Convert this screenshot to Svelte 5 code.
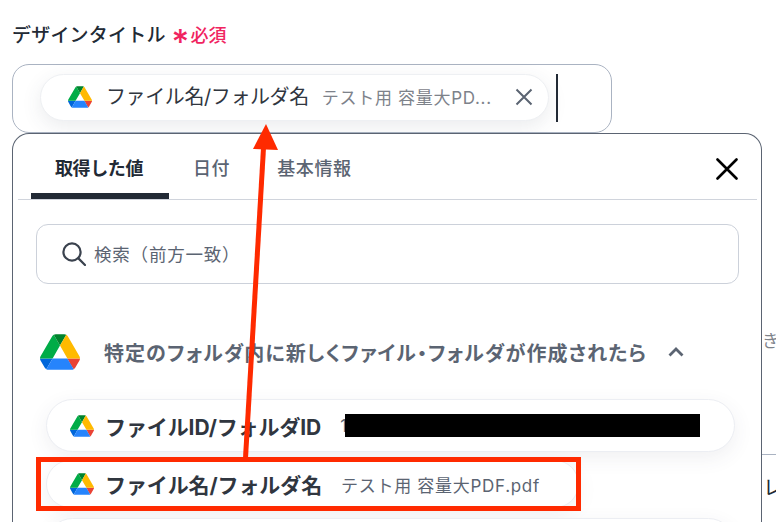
<script>
  const tabs = [
    { label: '取得した値', active: true },
    { label: '日付', active: false },
    { label: '基本情報', active: false }
  ];
</script>

{#snippet drive(cls)}
  <svg class={cls} viewBox="0 0 87.3 78" aria-hidden="true">
    <path d="m6.6 66.85 3.85 6.65c.8 1.4 1.95 2.5 3.3 3.3l13.75-23.8h-27.5c0 1.55.4 3.1 1.2 4.5z" fill="#0066da"/>
    <path d="m43.65 25-13.75-23.8c-1.35.8-2.5 1.9-3.3 3.3l-25.4 44a9.06 9.06 0 0 0 -1.2 4.5h27.5z" fill="#00ac47"/>
    <path d="m73.55 76.8c1.35-.8 2.5-1.9 3.3-3.3l1.6-2.75 7.65-13.25c.8-1.4 1.2-2.95 1.2-4.5h-27.502l5.852 11.5z" fill="#ea4335"/>
    <path d="m43.65 25 13.75-23.8c-1.35-.8-2.9-1.2-4.5-1.2h-18.5c-1.6 0-3.15.45-4.5 1.2z" fill="#00832d"/>
    <path d="m59.8 53h-32.3l-13.75 23.8c1.35.8 2.9 1.2 4.5 1.2h50.8c1.6 0 3.15-.45 4.5-1.2z" fill="#2684fc"/>
    <path d="m73.4 26.5-12.7-22c-.8-1.4-1.95-2.5-3.3-3.3l-13.75 23.8 16.15 28h27.45c0-1.55-.4-3.1-1.2-4.5z" fill="#ffba00"/>
  </svg>
{/snippet}

<div class="page">
  <div class="label">
    <span class="label-text">デザインタイトル</span>
    <span class="star">*</span>
    <span class="req">必須</span>
  </div>

  <div class="input">
    <div class="pill">
      {@render drive('icon-m')}
      <span class="pill-name">ファイル名/フォルダ名</span>
      <span class="pill-value">テスト用 容量大PD...</span>
      <svg class="pill-x" viewBox="0 0 18 18" aria-hidden="true">
        <path d="M1.5 1.5 16.5 16.5M16.5 1.5 1.5 16.5" />
      </svg>
    </div>
    <div class="caret"></div>
  </div>

  <div class="lower">
    <div class="panel">
      <div class="tabs">
        {#each tabs as t}
          <div class="tab" class:active={t.active}>{t.label}</div>
        {/each}
        <svg class="close" viewBox="0 0 22 22" aria-hidden="true">
          <path d="M1.5 1.5 20.5 20.5M20.5 1.5 1.5 20.5" />
        </svg>
      </div>

      <div class="search">
        <svg class="search-icon" viewBox="0 0 24 24" aria-hidden="true">
          <circle cx="10" cy="10" r="8.6" />
          <path d="M16.4 16.4 23 23" />
        </svg>
        <span>検索（前方一致）</span>
      </div>

      <div class="section">
        {@render drive('icon-l')}
        <span class="section-title">特定のフォルダ内に新しくファイル・フォルダが作成されたら</span>
        <svg class="chevron" viewBox="0 0 16 10" aria-hidden="true">
          <path d="M1.5 8.5 8 2l6.5 6.5" />
        </svg>
      </div>

      <div class="rows">
        <div class="row row-wide">
          {@render drive('icon-m')}
          <span class="row-name">ファイルID/フォルダID</span>
          <span class="row-value">1</span>
          <span class="redact"></span>
        </div>
        <div class="row row-short">
          {@render drive('icon-m')}
          <span class="row-name">ファイル名/フォルダ名</span>
          <span class="row-value">テスト用 容量大PDF.pdf</span>
        </div>
        <div class="row row-wide"></div>
      </div>
    </div>

    <div class="behind">
      <div class="behind-a">き</div>
      <div class="behind-line"></div>
      <div class="behind-b">レ</div>
    </div>
  </div>

  <svg class="annotation" viewBox="0 0 776 522" aria-hidden="true">
    <rect x="38.5" y="459.5" width="540" height="49" />
    <path class="shaft" d="M245.5 458 263.5 148" />
    <path class="head" d="M266 124 278 150 253 149Z" />
  </svg>
</div>

<style>
  :global(body) {
    margin: 0;
    background: #fff;
  }
  .page {
    position: relative;
    width: 776px;
    height: 522px;
    overflow: hidden;
    box-sizing: border-box;
    padding-top: 23px;
    font-family: Inter, "Noto Sans CJK JP", sans-serif;
    color: #222a35;
  }
  .label {
    display: flex;
    align-items: center;
    height: 26px;
    margin-left: 12px;
    font-size: 19px;
    line-height: 26px;
    font-weight: 500;
    white-space: nowrap;
  }
  .label-text {
    letter-spacing: 0.2px;
  }
  .star {
    margin-left: 6px;
    width: 14px;
    text-align: center;
    color: #f0245f;
    font-size: 34px;
    font-weight: 500;
    line-height: 26px;
    padding-top: 12px;
    box-sizing: border-box;
  }
  .req {
    margin-left: 5px;
    color: #f0245f;
    font-size: 18px;
  }
  .input {
    display: flex;
    align-items: center;
    box-sizing: border-box;
    width: 600px;
    height: 69px;
    margin: 15px 0 0 12px;
    padding: 0 0 2px 27px;
    border: 1px solid #aab3c2;
    border-radius: 17px;
    background: #fff;
  }
  .pill {
    display: flex;
    align-items: center;
    box-sizing: border-box;
    width: 509px;
    height: 47px;
    padding: 0 0 1px 27px;
    border: 1px solid #eef0f3;
    border-radius: 24px;
    background: #fff;
    box-shadow: 0 6px 20px rgba(60, 70, 90, 0.1);
    white-space: nowrap;
  }
  .icon-m {
    width: 24px;
    height: 22px;
    flex: none;
  }
  .icon-l {
    width: 40px;
    height: 36px;
    flex: none;
  }
  .pill-name {
    margin-left: 14px;
    font-size: 20px;
    line-height: 28px;
    letter-spacing: -0.4px;
    color: #30363f;
  }
  .pill-value {
    margin-left: 13px;
    padding-bottom: 2px;
    font-size: 17px;
    letter-spacing: 0.7px;
    color: #7d828a;
  }
  .pill-x {
    width: 18px;
    height: 18px;
    margin-left: auto;
    margin-right: 15px;
    fill: none;
    stroke: #5b6472;
    stroke-width: 2;
  }
  .caret {
    width: 2px;
    height: 48px;
    margin-left: 7px;
    background: #222a35;
  }
  .lower {
    display: flex;
  }
  .panel {
    box-sizing: border-box;
    width: 750px;
    height: 480px;
    margin-left: 12px;
    padding: 0 4px 0 5px;
    border: 1px solid #5b6472;
    border-bottom: 0;
    border-radius: 17px 17px 0 0;
    background: #fff;
    flex: none;
  }
  .tabs {
    position: relative;
    display: flex;
    height: 65px;
    padding-left: 13px;
    border-bottom: 1px solid #d0d4dc;
  }
  .tab {
    box-sizing: border-box;
    padding: 23px 23px 0 24px;
    font-size: 18px;
    line-height: 24px;
    font-weight: 500;
    letter-spacing: 0.6px;
    color: #5b6472;
    white-space: nowrap;
  }
  .tab:first-child {
    width: 138px;
  }
  .tab.active {
    color: #222a35;
    font-weight: 700;
    letter-spacing: -0.4px;
    border-bottom: 6px solid #222a35;
    border-radius: 6px 6px 0 0;
  }
  .close {
    position: absolute;
    right: 19px;
    top: 24px;
    width: 22px;
    height: 22px;
    fill: none;
    stroke: #000;
    stroke-width: 2.6;
    stroke-linecap: round;
  }
  .search {
    display: flex;
    align-items: center;
    gap: 8px;
    box-sizing: border-box;
    width: 703px;
    height: 60px;
    margin: 24px 0 0 18px;
    padding: 0 0 1px 25px;
    border: 1px solid #ccd1da;
    border-radius: 12px;
    font-size: 17.5px;
    letter-spacing: 0.8px;
    color: #5b6472;
    white-space: nowrap;
  }
  .search-icon {
    width: 24px;
    height: 24px;
    fill: none;
    stroke: #3a424e;
    stroke-width: 2.2;
    stroke-linecap: round;
  }
  .section {
    display: flex;
    align-items: center;
    height: 36px;
    margin: 50px 0 0 22px;
    white-space: nowrap;
  }
  .section-title {
    margin-left: 24px;
    font-size: 20px;
    font-weight: 700;
    font-feature-settings: "palt";
    letter-spacing: 1.05px;
    color: #5b6472;
  }
  .chevron {
    width: 16px;
    height: 10px;
    margin-left: 21px;
    fill: none;
    stroke: #5b6472;
    stroke-width: 2.8;
  }
  .rows {
    display: flex;
    flex-direction: column;
    gap: 8px;
    margin: 29px 0 0 28px;
  }
  .row {
    display: flex;
    align-items: center;
    box-sizing: border-box;
    height: 53px;
    padding-left: 23px;
    border: 1px solid #eceef3;
    border-radius: 27px;
    background: #fff;
    box-shadow: 0 6px 20px rgba(60, 70, 90, 0.08);
    white-space: nowrap;
    flex: none;
  }
  .row-wide {
    width: 689px;
  }
  .row-short {
    width: 533px;
    height: 48px;
    margin-bottom: 2px;
  }
  .row-name {
    margin-left: 11px;
    font-size: 21px;
    font-weight: 700;
    letter-spacing: -0.1px;
    color: #30363f;
  }
  .row-value {
    margin-left: 19px;
    font-size: 17px;
    letter-spacing: 0.7px;
    color: #5b6472;
  }
  .redact {
    width: 355px;
    height: 23px;
    margin-left: -3px;
    background: #000;
  }
  .behind {
    flex: 1;
    min-width: 0;
    overflow: hidden;
    font-size: 17px;
    line-height: 24px;
    color: #222a35;
  }
  .behind-a {
    margin-top: 196px;
    color: #7d828a;
  }
  .behind-line {
    height: 1px;
    margin-top: 101px;
    background: #aab3c2;
  }
  .behind-b {
    margin-top: 21px;
    padding-left: 1px;
    font-size: 20px;
  }
  .annotation {
    position: absolute;
    left: 0;
    top: 0;
    width: 776px;
    height: 522px;
    pointer-events: none;
  }
  .annotation rect {
    fill: none;
    stroke: #ff2a00;
    stroke-width: 5;
  }
  .shaft {
    fill: none;
    stroke: #ff2a00;
    stroke-width: 5;
  }
  .head {
    fill: #ff2a00;
  }
</style>
